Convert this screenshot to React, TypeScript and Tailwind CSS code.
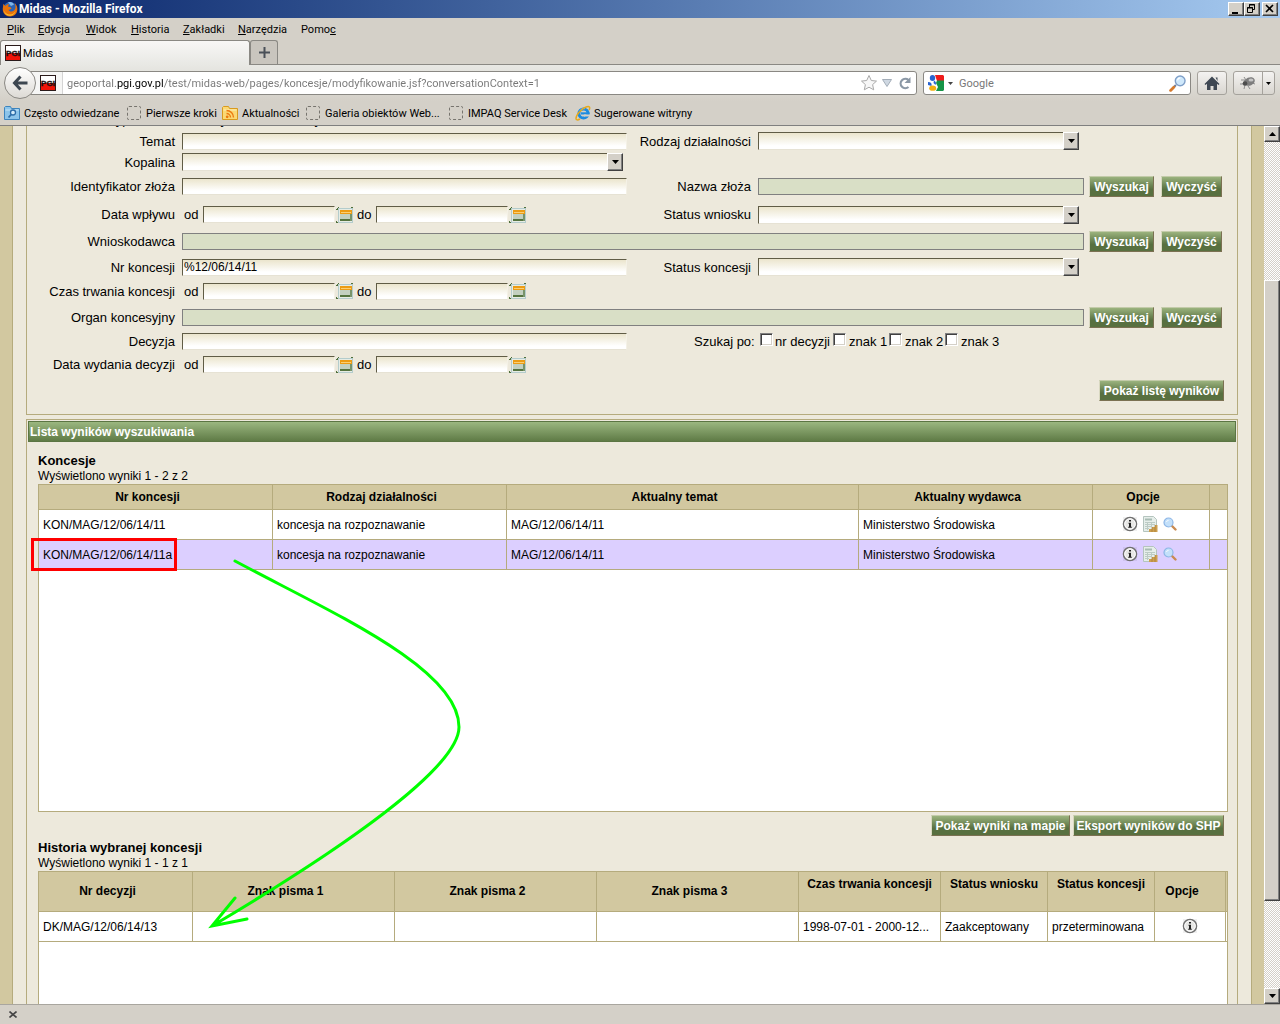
import React from 'react';
import clsx from 'clsx';

const MENU = [
  { before: '', key: 'P', after: 'lik', width: 'w-[31px]' },
  { before: '', key: 'E', after: 'dycja', width: 'w-12' },
  { before: '', key: 'W', after: 'idok', width: 'w-[45px]' },
  { before: '', key: 'H', after: 'istoria', width: 'w-[52px]' },
  { before: '', key: 'Z', after: 'akładki', width: 'w-[55px]' },
  { before: '', key: 'N', after: 'arzędzia', width: 'w-[63px]' },
  { before: 'Pomo', key: 'c', after: '', width: 'w-12' },
];

const BOOKMARKS = [
  { label: 'Często odwiedzane', icon: 'search', width: 'w-[123px]' },
  { label: 'Pierwsze kroki', icon: 'blank', width: 'w-[95px]' },
  { label: 'Aktualności', icon: 'rss', width: 'w-[84px]' },
  { label: 'Galeria obiektów Web...', icon: 'blank', width: 'w-[143px]' },
  { label: 'IMPAQ Service Desk', icon: 'blank', width: 'w-[126px]' },
  { label: 'Sugerowane witryny', icon: 'ie', width: 'w-32' },
];

const CONCESSIONS = [
  { nr: 'KON/MAG/12/06/14/11', kind: 'koncesja na rozpoznawanie', topic: 'MAG/12/06/14/11', issuer: 'Ministerstwo Środowiska' },
  { nr: 'KON/MAG/12/06/14/11a', kind: 'koncesja na rozpoznawanie', topic: 'MAG/12/06/14/11', issuer: 'Ministerstwo Środowiska', selected: true },
];

const RAISED = 'border border-t-white border-l-white border-r-[#404040] border-b-[#404040] bg-[#d4d0c8] shadow-[inset_-1px_-1px_0_#808080]';
const FIELD =
  'min-w-0 rounded-none border border-t-[#605c46] border-l-[#605c46] border-r-[#f4f1e6] border-b-[#e6e2d4] bg-linear-to-b from-[#ebe5cd] to-white to-80% outline-none';

/* ---------- icons ---------- */

const FirefoxIcon = () => (
  <svg width="16" height="16" viewBox="0 0 16 16" aria-hidden="true">
    <circle cx="8" cy="8" r="7" fill="#2b63b5" />
    <path d="M6 1.500c3-1 5 0 6 2L9 5z" fill="#7fb6ea" />
    <path d="M1 3c0 1 .5 1.500 0 3C0 10 2 15.500 8 15.500c5 0 7.800-4 7.300-8.500-.2-2-1.300-4-2.800-5 1.500 3 1.500 6-.5 7.500-2 1.800-5 1-5.500-.8 1.500.3 2-.7 3-1.200C9 6 8 6 6.500 6 6 5 6.500 4 7 3 5 3 4 4 3.500 5 2.500 4.500 2 3.500 1 3z" fill="#e8720c" />
    <path d="M1.500 7c0 4 3 6.500 6.500 6.500 3 0 5-2 5.800-4-1 4-4 5.500-6.500 5.300C3.500 14.500 1.500 11 1.500 7z" fill="#f9c22e" />
  </svg>
);

const PgiIcon = () => (
  <svg className="shrink-0" width="16" height="16" viewBox="0 0 16 16" aria-hidden="true">
    <path d="M0 0h16v16H0z" fill="#2a1a1a" />
    <path d="M1 1h14v7H1z" fill="#fff" />
    <path d="M1 8h14v7H1z" fill="#f01408" />
    <text x="8" y="11" textAnchor="middle" fontSize="8" fontWeight="bold" fontFamily="Liberation Sans, sans-serif" fill="#1c1010" stroke="#1c1010" strokeWidth=".4">
      PGI
    </text>
  </svg>
);

const BookmarkIcon = ({ kind }: { kind: string }) => {
  if (kind === 'blank') {
    return <span className="mr-[5px] size-[14px] shrink-0 rounded-[2px] border border-dashed border-[#77746e]" />;
  }
  if (kind === 'ie') {
    return (
      <svg className="mr-[3px] shrink-0" width="16" height="16" viewBox="0 0 16 16" aria-hidden="true">
        <circle cx="8.500" cy="8.500" r="4.600" fill="none" stroke="#1c8be0" strokeWidth="3" />
        <path d="M6 7.300h8.500v2.200H6z" fill="#1c8be0" />
        <path d="M9 9.500h6v2H9z" fill="#d4d0c8" />
        <path d="M5 5.500C6 4 8 3.200 10 3.700" fill="none" stroke="#8fd0fa" />
        <path d="M14 5C15.500 2.500 14.500.5 11 2 6 4 1 10 1 13.500c0 1.500 1.500 2 4 .5" fill="none" stroke="#e6a91c" strokeWidth="1.500" />
      </svg>
    );
  }
  const blue = kind === 'search';
  return (
    <svg className="mr-1 shrink-0" width="16" height="16" viewBox="0 0 16 16" aria-hidden="true">
      <path d="M.5 14.500v-12l1-1h5l1 2h8v11z" fill={blue ? '#8cc4ea' : '#fbd873'} stroke={blue ? '#3d84bd' : '#d99a1e'} />
      <path d="M1.500 5h13" stroke={blue ? '#c5e5f8' : '#fdf0b8'} />
      {blue ? (
        <g fill="none" stroke="#2c6ca8" strokeWidth="1.300">
          <circle cx="9" cy="7.500" r="2.500" fill="#d4ecfa" />
          <path d="M7.200 9.500 4.500 12.500" strokeWidth="1.800" />
        </g>
      ) : (
        <g fill="none" stroke="#ec7a10" strokeWidth="1.400">
          <path d="M4.500 5.500c4 0 7 3 7 7M4.500 8.500c2.200 0 4 1.800 4 4" />
          <circle cx="5.200" cy="11.800" r=".7" fill="#ec7a10" />
        </g>
      )}
    </svg>
  );
};

const GoogleIcon = () => (
  <svg className="shrink-0" width="16" height="16" viewBox="0 0 16 16" aria-hidden="true">
    <path d="M7 0h8l1 1v5H9z" fill="#ee1c1c" />
    <path d="M9 5.500h7V15l-1 1H8l2-4-2-4z" fill="#159447" />
    <ellipse cx="4.500" cy="3" rx="2.700" ry="3" fill="#2a64cf" />
    <path d="M0 7c3 0 4 1.500 3.500 4L0 10z" fill="#2a64cf" />
    <path d="M6 5.500c2 1 2.500 3 1.500 4.500L5.500 8z" fill="#2a64cf" />
    <ellipse cx="4.700" cy="13.200" rx="3.500" ry="2.600" fill="#f3b010" />
  </svg>
);

const MagnifierIcon = () => (
  <svg width="17" height="17" viewBox="0 0 16 16" aria-hidden="true">
    <path d="m6.500 9.500-2 2" stroke="#6f7f9c" strokeWidth="2" />
    <path d="m4.500 11.500-3 3" stroke="#d67a2c" strokeWidth="2.600" strokeLinecap="round" />
    <circle cx="10.500" cy="5.500" r="4.600" fill="#cfe8fb" stroke="#7f9fc8" strokeWidth="1.300" />
    <path d="M8 5c.3-1.500 1.300-2.200 2.600-2.300" stroke="#fff" strokeWidth="1.200" fill="none" />
  </svg>
);

const SearchRowIcon = () => (
  <svg width="14" height="14" viewBox="0 0 14 14" aria-hidden="true">
    <path d="m9 9 3.500 3.500" stroke="#c98b52" strokeWidth="2.400" strokeLinecap="round" />
    <circle cx="5.500" cy="5.500" r="4.500" fill="#c3e0fa" stroke="#8db6e6" strokeWidth="1.200" />
    <path d="M3.500 5c.3-1 1-1.600 2-1.600" stroke="#fff" fill="none" />
  </svg>
);

const InfoIcon = () => (
  <svg width="16" height="16" viewBox="0 0 16 16" aria-hidden="true">
    <path d="M1 1h14v14H1z" fill="#000" opacity=".06" />
    <circle cx="8" cy="8" r="6.500" fill="#e8e8e6" stroke="#707070" strokeWidth="1.600" />
    <circle cx="8" cy="8" r="5.300" fill="none" stroke="#fff" />
    <path d="M7 4h2v1.600H7zM6.500 6.700H9v4h.8v1H6.200v-1H7v-3h-.5z" fill="#222" />
  </svg>
);

const ReportIcon = () => (
  <svg width="15" height="16" viewBox="0 0 15 16" aria-hidden="true">
    <path d="M.5.5h10l3 3v12H.5z" fill="#e6eeea" stroke="#b4c4be" />
    <path d="M2 2.500h7v2H2z" fill="#a9bcb4" />
    <path d="M2 6.500h10M2 8.500h10M2 10.500h7M2 12.500h4M4.500 6v8M8.500 6v5" stroke="#bccbc5" />
    <path d="M6 13h3v3H6zM9 11h3v5H9zM12 9h2.500v7H12z" fill="#cda050" />
    <path d="M9 11v5M12 9v7" stroke="#9c7430" strokeWidth=".6" />
  </svg>
);

const CalendarIcon = () => (
  <svg width="19" height="18" viewBox="0 0 19 18" shapeRendering="crispEdges" aria-hidden="true">
    <path d="M1 3h1V2h1V1M16 1h1v1h1M1 15v1h1v1" fill="none" stroke="#4f6f3a" />
    <path d="M3 2h15v15H3z" fill="#b4cccc" />
    <path d="M4 3h13v13H4z" fill="#e6ece4" />
    <path d="M5 4h12v4H5z" fill="#ec9c14" />
    <path d="M6 6h10v1H6z" fill="#fbcf74" />
    <path d="M5 8h12v7H5z" fill="#c3d0c0" />
    <path d="M5 13h12v2H5z" fill="#55743f" />
    <path d="M15 8h2v7h-2z" fill="#78946a" />
  </svg>
);

/* ---------- form controls ---------- */

const ActionButton = ({ children, className }: { children: React.ReactNode; className?: string }) => (
  <button
    type="button"
    className={clsx(
      'h-[21px] shrink-0 border border-t-[#c3cba9] border-l-[#d8d8c0] border-r-[#7b7152] border-b-[#7b7152] bg-linear-to-b from-[#9bb37e] to-[#587040] to-65% px-[2px] text-xs leading-[18px] font-bold whitespace-nowrap text-white',
      className,
    )}
  >
    {children}
  </button>
);

const FieldLabel = ({ id, children }: { id: string; children: React.ReactNode }) => (
  <label htmlFor={id} className="pt-px pr-[7px] text-right whitespace-nowrap">
    {children}
  </label>
);

const TextField = ({ id, value }: { id: string; value?: string }) => (
  <input id={id} type="text" defaultValue={value} className={clsx(FIELD, 'h-[17px] w-full pl-px text-xs')} />
);

const LockedField = ({ id, className }: { id: string; className?: string }) => (
  <input id={id} type="text" readOnly className={clsx('h-[17px] w-full min-w-0 border border-[#808080] bg-[#d9dfc6] outline-none', className)} />
);

const SelectField = ({ id, className }: { id: string; className?: string }) => (
  <div className={clsx('relative h-[18px]', className)}>
    <select id={id} className={clsx(FIELD, 'block h-full w-full appearance-none')}>
      <option value=""></option>
    </select>
    <span className={clsx('pointer-events-none absolute inset-y-0 right-0 flex w-4 items-center justify-center', RAISED)}>
      <svg width="7" height="4" viewBox="0 0 7 4" aria-hidden="true">
        <path d="M0 0h7L3.500 4z" />
      </svg>
    </span>
  </div>
);

const DateRange = ({ id }: { id: string }) => (
  <div className="flex items-center">
    <label htmlFor={`${id}-from`} className="w-[21px] pt-px pl-[2px]">od</label>
    <input id={`${id}-from`} type="text" className={clsx(FIELD, 'h-[17px] w-[132px] text-xs')} />
    <button type="button" aria-label="Kalendarz">
      <CalendarIcon />
    </button>
    <label htmlFor={`${id}-to`} className="w-[22px] pt-px pl-[3px]">do</label>
    <input id={`${id}-to`} type="text" className={clsx(FIELD, 'h-[17px] w-[132px] text-xs')} />
    <button type="button" aria-label="Kalendarz">
      <CalendarIcon />
    </button>
  </div>
);

const FormRow = ({ height, children }: { height: string; children: React.ReactNode }) => (
  <div className={clsx('grid grid-cols-[155px_minmax(0,445fr)_131px_minmax(0,326fr)_153px] items-center', height)}>{children}</div>
);

const SearchClear = () => (
  <div className="flex gap-[7px] pl-[5px]">
    <ActionButton className="w-[65px]">Wyszukaj</ActionButton>
    <ActionButton className="w-[61px]">Wyczyść</ActionButton>
  </div>
);

const SearchForm = () => (
  <form className="-mt-[18px] border border-[#b5ab7d] pb-[13px] text-[13px]">
    {/* first row is scrolled under the toolbar */}
    <FormRow height="h-[22px]">
      <span className="pr-[7px] text-right">Typ obiektu</span>
      <div className="flex">
        <label className="flex w-[107px] items-center gap-1">
          <input type="radio" name="kind" className="size-3" /> wszystkie
        </label>
        <label className="flex items-center gap-1">
          <input type="radio" name="kind" className="size-3" /> wybrane
        </label>
      </div>
    </FormRow>
    <FormRow height="h-5">
      <FieldLabel id="temat">Temat</FieldLabel>
      <TextField id="temat" />
      <FieldLabel id="rodzaj">Rodzaj działalności</FieldLabel>
      <SelectField id="rodzaj" className="mr-[5px]" />
    </FormRow>
    <FormRow height="h-[22px]">
      <FieldLabel id="kopalina">Kopalina</FieldLabel>
      <SelectField id="kopalina" className="mr-1" />
    </FormRow>
    <FormRow height="h-[27px]">
      <FieldLabel id="zloze">Identyfikator złoża</FieldLabel>
      <TextField id="zloze" />
      <FieldLabel id="nazwa">Nazwa złoża</FieldLabel>
      <LockedField id="nazwa" />
      <SearchClear />
    </FormRow>
    <FormRow height="h-[29px]">
      <FieldLabel id="wplyw-from">Data wpływu</FieldLabel>
      <DateRange id="wplyw" />
      <FieldLabel id="status-wniosku">Status wniosku</FieldLabel>
      <SelectField id="status-wniosku" className="mr-[5px]" />
    </FormRow>
    <FormRow height="h-[25px]">
      <FieldLabel id="wnioskodawca">Wnioskodawca</FieldLabel>
      <LockedField id="wnioskodawca" className="col-span-3" />
      <SearchClear />
    </FormRow>
    <FormRow height="h-[26px]">
      <FieldLabel id="nr">Nr koncesji</FieldLabel>
      <TextField id="nr" value="%12/06/14/11" />
      <FieldLabel id="status-koncesji">Status koncesji</FieldLabel>
      <SelectField id="status-koncesji" className="mr-[5px]" />
    </FormRow>
    <FormRow height="h-[22px]">
      <FieldLabel id="czas-from">Czas trwania koncesji</FieldLabel>
      <DateRange id="czas" />
    </FormRow>
    <FormRow height="h-[31px]">
      <FieldLabel id="organ">Organ koncesyjny</FieldLabel>
      <LockedField id="organ" className="col-span-3" />
      <SearchClear />
    </FormRow>
    <FormRow height="h-4">
      <FieldLabel id="decyzja">Decyzja</FieldLabel>
      <TextField id="decyzja" />
      <div className="col-span-2 flex items-center pl-[67px] whitespace-nowrap">
        <span className="w-[66px]">Szukaj po:</span>
        {['nr decyzji', 'znak 1', 'znak 2', 'znak 3'].map((name, i) => (
          <label key={name} className={clsx('flex items-center', i === 0 ? 'w-[73px] gap-[2px]' : 'w-14 gap-[3px]')}>
            <input
              type="checkbox"
              className="mb-1 size-[13px] shrink-0 appearance-none border border-t-[#808080] border-l-[#808080] border-r-white border-b-white bg-white shadow-[inset_1px_1px_0_#404040,inset_-1px_-1px_0_#d4d0c8]"
            />
            {name}
          </label>
        ))}
      </div>
    </FormRow>
    <FormRow height="h-[31px]">
      <FieldLabel id="wydanie-from">Data wydania decyzji</FieldLabel>
      <DateRange id="wydanie" />
    </FormRow>
    <div className="flex justify-end pr-[13px]">
      <ActionButton className="w-[125px]">Pokaż listę wyników</ActionButton>
    </div>
  </form>
);

/* ---------- result tables ---------- */

const Th = ({ children, className }: { children?: React.ReactNode; className?: string }) => (
  <th scope="col" className={clsx('overflow-hidden border-r border-b border-[#b5ab7d] p-0 font-bold whitespace-nowrap last:border-r-0', className)}>
    {children}
  </th>
);

const Td = ({ children, className }: { children?: React.ReactNode; className?: string }) => (
  <td className={clsx('h-[30px] overflow-hidden border-r border-b border-[#b5ab7d] p-0 text-ellipsis whitespace-nowrap last:border-r-0', className)}>
    {children}
  </td>
);

const ConcessionsTable = () => (
  <div className="h-[328px] border border-[#b5ab7d] bg-white">
    <table className="w-full table-fixed border-separate border-spacing-0 text-xs">
      <colgroup>
        <col className="w-[234px]" />
        <col className="w-[234px]" />
        <col className="w-[352px]" />
        <col className="w-[234px]" />
        <col className="w-[117px]" />
        <col className="w-[17px]" />
      </colgroup>
      <thead className="bg-[#d2c8a0]">
        <tr className="h-[25px]">
          {['Nr koncesji', 'Rodzaj działalności', 'Aktualny temat', 'Aktualny wydawca', 'Opcje'].map((name) => (
            <Th key={name} className="pr-4">{name}</Th>
          ))}
          <Th />
        </tr>
      </thead>
      <tbody>
        {CONCESSIONS.map((row) => (
          <tr key={row.nr} className={clsx(row.selected && 'bg-[#dccfff]')}>
            <Td className="pl-1">{row.nr}</Td>
            <Td className="pl-1">{row.kind}</Td>
            <Td className="pl-1">{row.topic}</Td>
            <Td className="pl-1">{row.issuer}</Td>
            <Td>
              <div className="flex items-center justify-center gap-[5px] pr-1 pb-[2px]">
                <button type="button" aria-label="Informacje"><InfoIcon /></button>
                <button type="button" aria-label="Raport"><ReportIcon /></button>
                <button type="button" aria-label="Podgląd"><SearchRowIcon /></button>
              </div>
            </Td>
            <Td />
          </tr>
        ))}
      </tbody>
    </table>
  </div>
);

const HistoryTable = () => (
  <div className="h-[328px] border border-[#b5ab7d] bg-white">
    <table className="w-full table-fixed border-separate border-spacing-0 text-xs">
      <colgroup>
        <col className="w-[154px]" />
        <col className="w-[202px]" />
        <col className="w-[202px]" />
        <col className="w-[202px]" />
        <col className="w-[142px]" />
        <col className="w-[107px]" />
        <col className="w-[107px]" />
        <col className="w-[71px]" />
        <col className="w-px" />
      </colgroup>
      <thead className="bg-[#d2c8a0]">
        <tr className="h-10">
          {['Nr decyzji', 'Znak pisma 1', 'Znak pisma 2', 'Znak pisma 3'].map((name) => (
            <Th key={name} className="pr-4 pb-[2px]">{name}</Th>
          ))}
          {['Czas trwania koncesji', 'Status wniosku', 'Status koncesji'].map((name) => (
            <Th key={name} className="pb-4">{name}</Th>
          ))}
          <Th className="pr-4 pb-[2px]">Opcje</Th>
          <Th />
        </tr>
      </thead>
      <tbody>
        <tr>
          <Td className="pl-1">DK/MAG/12/06/14/13</Td>
          <Td />
          <Td />
          <Td />
          <Td className="pl-1">1998-07-01 - 2000-12...</Td>
          <Td className="pl-1">Zaakceptowany</Td>
          <Td className="pl-1">przeterminowana</Td>
          <Td>
            <div className="flex justify-center pb-[2px]">
              <button type="button" aria-label="Informacje"><InfoIcon /></button>
            </div>
          </Td>
          <Td />
        </tr>
      </tbody>
    </table>
  </div>
);

const Results = () => (
  <section className="mt-1 border border-[#b5ab7d] pb-6">
    <h2 className="mx-px mt-px h-[21px] border border-[#5b7543] bg-linear-to-b from-[#9bb780] to-[#5f7b46] pl-px text-xs leading-5 font-bold text-white">
      Lista wyników wyszukiwania
    </h2>
    <div className="pr-[9px] pl-[11px]">
      <h3 className="pt-3 text-[13px] leading-[14px] font-bold">Koncesje</h3>
      <p className="text-xs leading-4">Wyświetlono wyniki 1 - 2 z 2</p>
      <ConcessionsTable />
      <div className="flex justify-end gap-[3px] pt-[3px] pr-1">
        <ActionButton className="w-[139px]">Pokaż wyniki na mapie</ActionButton>
        <ActionButton className="w-[151px]">Eksport wyników do SHP</ActionButton>
      </div>
      <h3 className="pt-[5px] text-[13px] leading-[14px] font-bold">Historia wybranej koncesji</h3>
      <p className="text-xs leading-4">Wyświetlono wyniki 1 - 1 z 1</p>
      <HistoryTable />
    </div>
  </section>
);

/* Red frame and green arrow drawn over the page */
const Annotations = () => (
  <svg className="pointer-events-none absolute top-0 left-0" width="480" height="840" viewBox="0 126 480 840" fill="none" aria-hidden="true">
    <rect x="32.500" y="539.500" width="143" height="30" stroke="#f00" strokeWidth="3" />
    <path d="M235 561C330 612 459 668 459 727 459 768 340 850 212 926M235 898 212 926l35-7" stroke="#0f0" strokeWidth="3" strokeLinecap="round" />
  </svg>
);

/* ---------- browser window ---------- */

const ArrowSvg = ({ up }: { up?: boolean }) => (
  <svg width="7" height="4" viewBox="0 0 7 4" aria-hidden="true">
    <path d={up ? 'M0 4h7L3.500 0z' : 'M0 0h7L3.500 4z'} />
  </svg>
);

const Scrollbar = () => (
  <div className="flex w-4 shrink-0 flex-col bg-[repeating-conic-gradient(#d4d0c8_0_25%,#fff_0_50%)] bg-[length:2px_2px]">
    <button type="button" aria-label="W górę" className={clsx('flex h-4 items-center justify-center', RAISED)}>
      <ArrowSvg up />
    </button>
    <div className="grow-[138]" />
    <div className={clsx('grow-[621]', RAISED)} />
    <div className="grow-[87]" />
    <button type="button" aria-label="W dół" className={clsx('flex h-4 items-center justify-center', RAISED)}>
      <ArrowSvg />
    </button>
  </div>
);

const TitleBar = () => (
  <div className="flex h-[18px] shrink-0 items-center bg-linear-to-r from-[#0a246a] to-[#a6caf0] px-[2px] text-white">
    <FirefoxIcon />
    <h1 className="ml-px flex-1 text-xs font-bold">Midas - Mozilla Firefox</h1>
    <button type="button" aria-label="Minimalizuj" className={clsx('h-[14px] w-4', RAISED)}>
      <svg width="14" height="12" viewBox="0 0 14 12" aria-hidden="true">
        <path d="M3 9h6v2H3z" />
      </svg>
    </button>
    <button type="button" aria-label="Przywróć" className={clsx('h-[14px] w-4', RAISED)}>
      <svg width="14" height="12" viewBox="0 0 14 12" fill="none" stroke="#000" aria-hidden="true">
        <path d="M4.500 4V1.500h5v5H8M4 2h6M2.500 4.500h5v5h-5zM2 5h6" />
      </svg>
    </button>
    <button type="button" aria-label="Zamknij" className={clsx('ml-[2px] h-[14px] w-4', RAISED)}>
      <svg width="14" height="12" viewBox="0 0 14 12" fill="none" stroke="#000" strokeWidth="1.600" aria-hidden="true">
        <path d="m3 2 7 7M10 2 3 9" />
      </svg>
    </button>
  </div>
);

const TabStrip = () => (
  <div className="flex h-[25px] shrink-0 items-stretch border-b border-[#8a8883]">
    <div className="-mb-px flex w-[250px] items-center gap-[2px] rounded-t-[3px] border border-b-0 border-[#8a8883] bg-linear-to-b from-[#f8f7f6] to-[#e8e8e4] pl-1">
      <PgiIcon />
      <span className="pt-[2px]">Midas</span>
    </div>
    <button type="button" aria-label="Nowa karta" className="flex w-7 items-center justify-center rounded-t-[3px] border border-b-0 border-[#8a8883] bg-[#c9c5be]">
      <svg width="11" height="11" viewBox="0 0 11 11" aria-hidden="true">
        <path d="M5.500 0v11M0 5.500h11" stroke="#4a5058" strokeWidth="2" />
      </svg>
    </button>
  </div>
);

const NavBar = () => (
  <div className="flex h-9 shrink-0 items-center bg-linear-to-b from-[#e8e8e4] to-[#d4d0c8] pr-[5px] pl-1">
    <button type="button" aria-label="Wstecz" className="z-10 -mr-[6px] flex size-8 shrink-0 items-center justify-center rounded-full border border-[#8a8883] bg-linear-to-b from-white to-[#dddad5]">
      <svg width="16" height="16" viewBox="0 0 16 16" fill="none" stroke="#3d4650" strokeWidth="3" aria-hidden="true">
        <path d="M8.500 1.500 2.500 8l6 6.500M3 8h12.500" />
      </svg>
    </button>
    <div className="flex h-6 min-w-0 flex-1 items-center rounded-r-[3px] border border-[#8a8883] bg-white pr-1">
      <span className="flex h-full w-8 shrink-0 items-center border-r border-[#d4d4d4] bg-[#f6f6f5] pl-[9px]">
        <PgiIcon />
      </span>
      <input
        type="text"
        aria-label="Adres"
        defaultValue="geoportal.pgi.gov.pl/test/midas-web/pages/koncesje/modyfikowanie.jsf?conversationContext=1"
        className="min-w-0 flex-1 bg-[linear-gradient(90deg,#777_53px,#000_53px_101px,#777_101px)] bg-clip-text pt-[2px] pl-1 text-transparent outline-none"
      />
      <button type="button" aria-label="Dodaj zakładkę" className="mr-[2px]">
        <svg width="18" height="18" viewBox="0 0 18 18" aria-hidden="true">
          <path d="m9 1.500 2.300 5 5.200.6-3.900 3.500 1.100 5.200L9 13.200l-4.700 2.600 1.100-5.200L1.500 7.100l5.200-.6z" fill="#f7f7f7" stroke="#a9a9a9" />
        </svg>
      </button>
      <button type="button" aria-label="Historia adresów" className="mr-1 w-[14px]">
        <svg width="10" height="8" viewBox="0 0 10 8" className="mx-auto" aria-hidden="true">
          <path d="M.5.5h9L5 7.500z" fill="#cfd8e2" stroke="#a3adb8" />
        </svg>
      </button>
      <button type="button" aria-label="Odśwież">
        <svg width="14" height="16" viewBox="0 0 14 16" aria-hidden="true">
          <path d="M10.500 12A4.700 4.700 0 1 1 10.500 5" fill="none" stroke="#8b98a6" strokeWidth="2.200" />
          <path d="M12.500 2v6H6.500z" fill="#8b98a6" />
        </svg>
      </button>
    </div>
    <div className="ml-[6px] flex h-6 w-[268px] shrink-0 items-center rounded-[3px] border border-[#8a8883] bg-white px-1">
      <GoogleIcon />
      <svg width="5" height="3" viewBox="0 0 5 3" className="ml-1" aria-hidden="true">
        <path d="M0 0h5L2.500 3z" fill="#444" />
      </svg>
      <input type="text" aria-label="Szukaj" placeholder="Google" className="min-w-0 flex-1 pt-[2px] pl-[6px] outline-none placeholder:text-[#777]" />
      <button type="button" aria-label="Szukaj">
        <MagnifierIcon />
      </button>
    </div>
    <button type="button" aria-label="Strona startowa" className="ml-[6px] flex h-6 w-[30px] shrink-0 items-center justify-center rounded-[3px] border border-[#a5a29c] bg-linear-to-b from-[#f4f3f1] to-[#d9d6d0]">
      <svg width="16" height="15" viewBox="0 0 16 15" aria-hidden="true">
        <path d="M8 .5 15.500 8l-1 1L13 7.800V14H9.500v-4h-3v4H3V7.800L1.500 9l-1-1zM11.500 1.500h2V5z" fill="#3f4853" />
      </svg>
    </button>
    <div className="ml-[6px] flex h-6 w-[42px] shrink-0 rounded-[3px] border border-[#a5a29c] bg-linear-to-b from-[#f4f3f1] to-[#d9d6d0]">
      <button type="button" aria-label="Firebug" className="flex flex-1 items-center justify-center border-r border-[#a5a29c]">
        <svg width="16" height="14" viewBox="0 0 16 14" aria-hidden="true">
          <path d="M1 4h4L3 8H0M5 9l-1 4M8 10l2 3M12 7l3 1M6 4 4 1" fill="none" stroke="#8d8d8d" />
          <ellipse cx="9.500" cy="5.500" rx="5.500" ry="4" transform="rotate(-25 9.500 5.500)" fill="#7d7d7d" />
          <ellipse cx="11" cy="4" rx="2.500" ry="1.500" fill="#c4c4c4" />
          <circle cx="5" cy="7.500" r="2.300" fill="#4d4d4d" />
        </svg>
      </button>
      <button type="button" aria-label="Opcje Firebug" className="flex w-[11px] items-center justify-center">
        <svg width="5" height="3" viewBox="0 0 5 3" aria-hidden="true">
          <path d="M0 0h5L2.500 3z" />
        </svg>
      </button>
    </div>
  </div>
);

export default function App() {
  return (
    <div className="flex h-screen flex-col overflow-hidden bg-[#d4d0c8] font-['Tahoma','Roboto',sans-serif] text-[11px] leading-[14px] text-black">
      <TitleBar />
      <nav className="flex h-[22px] shrink-0 items-center pt-[2px] pl-[7px]">
        {MENU.map((item) => (
          <button key={item.key} type="button" className={clsx('text-left whitespace-nowrap', item.width)}>
            {item.before}
            <u>{item.key}</u>
            {item.after}
          </button>
        ))}
      </nav>
      <TabStrip />
      <NavBar />
      <div className="flex h-[25px] shrink-0 items-center border-b border-[#808080] pl-1">
        {BOOKMARKS.map((item) => (
          <a key={item.label} href="#" className={clsx('flex shrink-0 items-center whitespace-nowrap', item.width)}>
            <BookmarkIcon kind={item.icon} />
            <span className="pt-[2px]">{item.label}</span>
          </a>
        ))}
      </div>

      <div className="flex min-h-0 flex-1">
        <main className="relative min-w-0 flex-1 overflow-hidden bg-[#d2c8a0] pr-3 pl-3 font-['Liberation_Sans',Arial,sans-serif]">
          <div className="border-x border-[#b5ab7d] bg-[#ede9dc] px-[13px]">
            <SearchForm />
            <Results />
          </div>
          <Annotations />
        </main>
        <Scrollbar />
      </div>

      <footer className="flex h-5 shrink-0 items-center border-t border-[#a9a69f] pl-[9px]">
        <button type="button" aria-label="Zamknij pasek dodatków">
          <svg width="8" height="7" viewBox="0 0 8 7" aria-hidden="true">
            <path d="m.5.5 7 6M7.500.5l-7 6" stroke="#444" strokeWidth="1.600" />
          </svg>
        </button>
      </footer>
    </div>
  );
}
